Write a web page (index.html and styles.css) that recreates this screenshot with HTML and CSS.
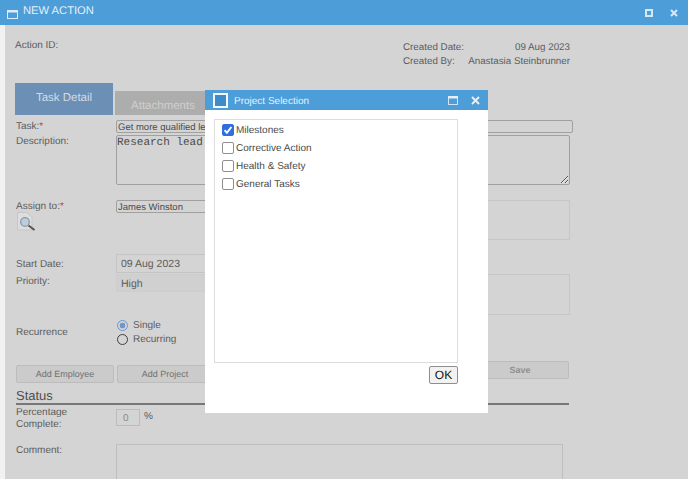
FILE: index.html
```html
<!DOCTYPE html>
<html lang="en">
<head>
  <meta charset="UTF-8" />
  <title>New Action</title>
  <link rel="stylesheet" href="styles.css">
</head>
<body>

  <div class="titlebar">
    <svg class="title-icon" width="11" height="9" viewBox="0 0 11 9">
      <rect x="0.5" y="0.5" width="10" height="8" fill="none" stroke="#dcedf8" />
      <rect x="0" y="0" width="11" height="2.5" fill="#dcedf8" />
    </svg>
    <span class="title-text">NEW ACTION</span>
    <div class="title-buttons">
      <svg width="8" height="8" viewBox="0 0 8 8">
        <rect x="1" y="1" width="6" height="6" fill="none" stroke="#d5e8f6" stroke-width="2" />
      </svg>
      <svg width="8" height="8" viewBox="0 0 8 8">
        <path d="M1 1 L7 7 M7 1 L1 7" stroke="#d5e8f6" stroke-width="2" />
      </svg>
    </div>
  </div>

  <div class="panel">
    <div class="head">
      <div class="action-id">Action ID:</div>
      <div class="created">
        <div class="created-row"><span>Created Date:</span><span>09 Aug 2023</span></div>
        <div class="created-row"><span>Created By:</span><span>Anastasia Steinbrunner</span></div>
      </div>
    </div>

    <div class="tabs">
      <div class="tab active">Task Detail</div>
      <div class="tab">Attachments</div>
    </div>

    <div class="row row-task">
      <label>Task:<em>*</em></label>
      <input class="field task-input" type="text" value="Get more qualified leads" />
    </div>
    <div class="row row-desc">
      <label>Description:</label>
      <textarea class="desc">Research lead</textarea>
    </div>

    <div class="row row-assign">
      <div class="assign-label">
        <label>Assign to:<em>*</em></label>
        <svg class="search-icon" width="19" height="19" viewBox="0 0 19 19">
          <path d="M0.5 0.5 H10 L15 5 V18 H0.5 Z" fill="#dcdddf" stroke="#c4c6c8" />
          <circle cx="8" cy="10" r="4.3" fill="#bccddd" stroke="#9098a0" stroke-width="1.3" />
          <path d="M11.5 13.5 L17.5 18" stroke="#555" stroke-width="2" />
        </svg>
      </div>
      <div class="split">
        <input class="field assign-input" type="text" value="James Winston" />
        <div class="box box-assign"></div>
      </div>
    </div>

    <div class="row row-dates">
      <div class="date-labels">
        <label>Start Date:</label>
        <label>Priority:</label>
      </div>
      <div class="split">
        <div class="date-fields">
          <div class="plain-field date-field">09 Aug 2023</div>
          <div class="plain-field priority-field">High</div>
        </div>
        <div class="box box-dates"></div>
      </div>
    </div>

    <div class="row row-recur">
      <label>Recurrence</label>
      <div class="radios">
        <div class="radio-row"><span class="radio checked"></span>Single</div>
        <div class="radio-row"><span class="radio"></span>Recurring</div>
      </div>
    </div>

    <div class="actions">
      <button class="btn btn-employee">Add Employee</button>
      <button class="btn btn-project">Add Project</button>
      <button class="btn btn-save">Save</button>
    </div>

    <div class="status-title">Status</div>

    <div class="row row-percent">
      <label>Percentage Complete:</label>
      <div class="percent">
        <div class="percent-input">0</div>
        <span>%</span>
      </div>
    </div>

    <div class="row row-comment">
      <label>Comment:</label>
      <div class="comment"></div>
    </div>
  </div>

  <div class="modal">
    <div class="modal-bar">
      <span class="modal-logo"></span>
      <span class="modal-title">Project Selection</span>
      <svg class="modal-max" width="10" height="9" viewBox="0 0 10 9">
        <rect x="0.5" y="0.5" width="9" height="8" fill="none" stroke="#cfe4f4" />
        <rect x="0" y="0" width="10" height="2.5" fill="#e4f0f9" />
      </svg>
      <svg class="modal-close" width="9" height="9" viewBox="0 0 9 9">
        <path d="M1 1 L8 8 M8 1 L1 8" stroke="#e4f0f9" stroke-width="2" />
      </svg>
    </div>
    <div class="modal-body">
      <div class="list">
        <div class="check-row">
          <span class="check on">
            <svg width="12" height="12" viewBox="0 0 12 12">
              <path d="M2.6 6.2 L4.9 8.8 L9.4 3" fill="none" stroke="#fff" stroke-width="2" />
            </svg>
          </span>
          Milestones
        </div>
        <div class="check-row"><span class="check"></span>Corrective Action</div>
        <div class="check-row"><span class="check"></span>Health &amp; Safety</div>
        <div class="check-row"><span class="check"></span>General Tasks</div>
      </div>
      <div class="modal-foot">
        <button class="ok">OK</button>
      </div>
    </div>
  </div>

</body>
</html>
```

FILE: styles.css
```css
html, body {
  margin: 0;
  padding: 0;
  height: 479px;
  overflow: hidden;
  background: #f2f2f2;
  font-family: 'Liberation Sans', Arial, sans-serif;
  font-size: 10px;
  color: #5c5c5c;
  text-rendering: geometricPrecision;
}

input, textarea, button {
  text-rendering: geometricPrecision;
}

.titlebar {
  height: 25px;
  background: #4c9dd8;
  display: flex;
  align-items: flex-start;
  box-sizing: border-box;
  padding: 9px 10px 0 7px;
}

.title-icon {
  margin-top: 1px;
}

.title-text {
  color: #e3f0f9;
  font-size: 11.2px;
  line-height: 14px;
  margin: -5px 0 0 5px;
}

.title-buttons {
  margin-left: auto;
  display: flex;
  gap: 17px;
}

.panel {
  margin-left: 5px;
  height: 454px;
  overflow: hidden;
  background: #d4d4d4;
  box-sizing: border-box;
  padding: 14px 0 0 10px;
}

.head {
  display: flex;
  justify-content: space-between;
  height: 44px;
  width: 555px;
}

.action-id {
  line-height: 13px;
}

.created {
  margin-top: 2px;
  width: 167px;
  font-size: 9.8px;
  line-height: 14px;
}

.created-row {
  display: flex;
  justify-content: space-between;
}

.tabs {
  display: flex;
  align-items: flex-end;
  gap: 2px;
  height: 32px;
}

.tab {
  width: 96px;
  height: 24px;
  background: #adadad;
  color: #cfcfcf;
  font-size: 11.5px;
  line-height: 31px;
  text-align: center;
}

.tab.active {
  width: 98px;
  height: 32px;
  line-height: 31px;
  background: #6c8fb5;
  color: #d2dbe5;
}

.row {
  display: grid;
  grid-template-columns: 100px 454px;
  margin-left: 1px;
}

label {
  line-height: 13px;
}

label em {
  color: #c9403c;
  font-style: normal;
}

.field {
  box-sizing: border-box;
  width: 100%;
  height: 13px;
  margin: 0;
  padding: 1px 1px 0;
  background: #d4d4d4;
  border: 1px solid #a0a0a0;
  border-radius: 2px;
  font-family: 'Liberation Sans', Arial, sans-serif;
  font-size: 9.5px;
  color: #4a4a4a;
  outline: none;
}

.row-task {
  height: 13px;
  margin-top: 5px;
  grid-template-columns: 100px 457px;
}

.row-task label {
  padding-top: 1px;
  line-height: 12px;
}

.row-desc {
  margin-top: 2px;
}

.desc {
  box-sizing: border-box;
  height: 50px;
  width: 100%;
  margin: 0;
  padding: 1px 0;
  background: #d4d4d4;
  border: 1px solid #a0a0a0;
  border-radius: 2px;
  font-family: 'Liberation Mono', monospace;
  font-size: 11px;
  line-height: 13px;
  color: #4a4a4a;
  outline: none;
}

.row-assign {
  margin-top: 15px;
  height: 40px;
}

.search-icon {
  display: block;
  margin: -1px 0 0 1px;
}

.split {
  display: flex;
  justify-content: space-between;
}

.assign-input {
  width: 150px;
}

.box {
  box-sizing: border-box;
  width: 200px;
  border: 1px solid #c6c6c6;
}

.box-assign {
  height: 40px;
}

.row-dates {
  margin-top: 14px;
  height: 61px;
}

.date-labels {
  display: flex;
  flex-direction: column;
  gap: 4px;
  padding-top: 4px;
}

.plain-field {
  box-sizing: border-box;
  width: 150px;
  font-size: 10.5px;
  padding-left: 4px;
  border: 1px solid #c4c4c4;
}

.date-field {
  height: 19px;
  line-height: 19px;
}

.priority-field {
  height: 18px;
  margin-top: 1px;
  line-height: 19px;
  border-color: #cdcdcd;
  background: #d0d0d0;
}

.box-dates {
  height: 41px;
  margin-top: 20px;
}

.row-recur {
  height: 34px;
  align-items: center;
}

.radios {
  display: flex;
  flex-direction: column;
  gap: 1px;
  padding-left: 1px;
}

.radio-row {
  display: flex;
  align-items: center;
  height: 13px;
}

.radio {
  box-sizing: border-box;
  width: 11px;
  height: 11px;
  margin-right: 5px;
  border: 1.3px solid #3f3f3f;
  border-radius: 50%;
}

.radio.checked {
  border-color: #6f97c9;
  background: radial-gradient(circle, #6f97c9 0 2.6px, #d4d4d4 3.2px);
}

.actions {
  display: flex;
  align-items: flex-start;
  width: 553px;
  margin: 12px 0 0 1px;
  height: 26px;
}

.btn {
  box-sizing: border-box;
  height: 18px;
  margin: 4px 0 0;
  padding: 0;
  background: #cbcbcb;
  border: 1px solid #bcbcbc;
  border-radius: 2px;
  font-family: 'Liberation Sans', Arial, sans-serif;
  font-size: 9px;
  color: #707070;
}

.btn-employee {
  width: 98px;
  margin-right: 3px;
}

.btn-project {
  width: 96px;
}

.btn-save {
  width: 98px;
  margin: 0 0 0 auto;
  color: #8f8f8f;
  font-weight: bold;
}

.status-title {
  box-sizing: border-box;
  width: 553px;
  height: 17px;
  margin: 1px 0 0 1px;
  font-size: 13px;
  line-height: 15px;
  color: #4f4f4f;
  border-bottom: 2px solid #777;
}

.row-percent {
  height: 38px;
}

.row-percent label {
  width: 70px;
  line-height: 12px;
  margin-top: 2px;
}

.percent {
  display: flex;
  align-items: flex-start;
  padding-top: 4px;
}

.percent-input {
  box-sizing: border-box;
  width: 24px;
  height: 17px;
  margin-right: 4px;
  line-height: 18px;
  padding-left: 6px;
  color: #8a8a8a;
  border: 1px solid #bcbcbc;
}

.percent span {
  margin-top: 2px;
}

.row-comment {
  margin-top: 1px;
  grid-template-columns: 100px 447px;
}

.comment {
  box-sizing: border-box;
  height: 35px;
  border: 1px solid #bebebe;
  border-bottom: none;
}

.modal {
  position: absolute;
  left: 205px;
  top: 90px;
  width: 283px;
  height: 323px;
  background: #fff;
  display: flex;
  flex-direction: column;
}

.modal-bar {
  height: 20px;
  flex-shrink: 0;
  background: #4c9dd8;
  display: flex;
  align-items: center;
  padding: 0 8px 0 8px;
}

.modal-logo {
  box-sizing: border-box;
  width: 15px;
  height: 15px;
  border: 2px solid #f1f7fb;
  background: #3f8bca;
}

.modal-title {
  margin-left: 6px;
  padding-top: 2px;
  color: #e7f2fa;
  font-size: 10px;
}

.modal-max {
  margin-left: auto;
}

.modal-close {
  margin-left: 13px;
}

.modal-body {
  padding: 9px 30px 0 9px;
}

.list {
  box-sizing: border-box;
  height: 244px;
  padding: 1px 7px 0;
  border: 1px solid #dcdcdc;
}

.check-row {
  display: flex;
  align-items: center;
  height: 18px;
  font-size: 10px;
  color: #4a4a4a;
}

.check {
  box-sizing: border-box;
  display: flex;
  width: 12px;
  height: 12px;
  margin-right: 2px;
  border: 1px solid #8f8f8f;
  border-radius: 2px;
  background: #fff;
  overflow: hidden;
}

.check.on {
  background: #2f6fe0;
  border-color: #2f6fe0;
}

.check svg {
  flex-shrink: 0;
  margin: -1px;
}

.modal-foot {
  display: flex;
  justify-content: flex-end;
  margin-top: 3px;
}

.ok {
  box-sizing: border-box;
  width: 29px;
  height: 18px;
  padding: 0;
  background: #f2f2f2;
  border: 1px solid #8f8f8f;
  border-radius: 2px;
  font-family: 'Liberation Sans', Arial, sans-serif;
  font-size: 12px;
  color: #111;
}
```
